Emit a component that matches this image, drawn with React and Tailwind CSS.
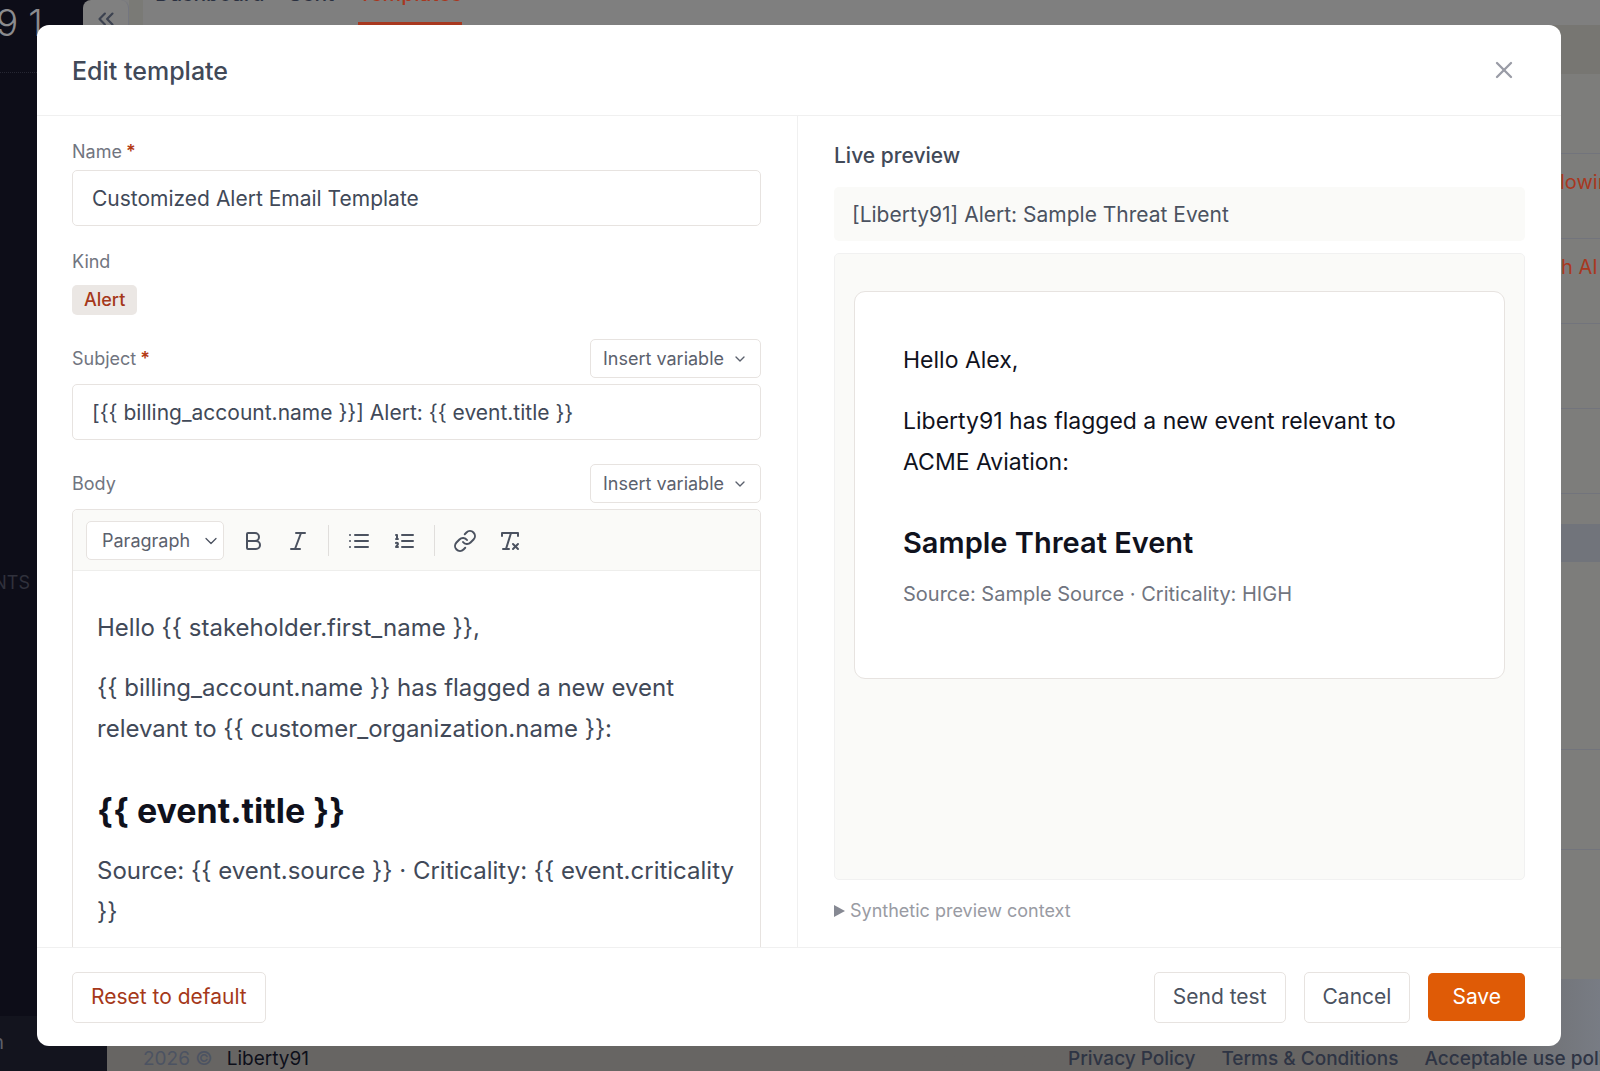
import React from "react";
import { Bold, Italic, Link as LinkIcon, RemoveFormatting, ChevronDown, ChevronsLeft, X } from "lucide-react";

function BulletListIcon() {
  return (
    <svg width="24" height="24" viewBox="0 0 24 24" fill="none" stroke="currentColor" strokeWidth="2" strokeLinecap="round" strokeLinejoin="round" aria-hidden="true">
      <path d="M8 6h13M8 12h13M8 18h13M3 6h.01M3 12h.01M3 18h.01" />
    </svg>
  );
}

function NumberedListIcon() {
  return (
    <svg width="24" height="24" viewBox="0 0 24 24" fill="none" stroke="currentColor" strokeWidth="2" strokeLinecap="round" strokeLinejoin="round" aria-hidden="true">
      <path d="M10 6h11M10 12h11M10 18h11" />
      <path d="M4 6h1v4M4 10h2M6 18H4c0-1 2-2 2-3s-1-1.5-2-1" />
    </svg>
  );
}

function ToolButton({ label, children }) {
  return (
    <button type="button" aria-label={label} className="flex size-9 shrink-0 items-center justify-center rounded text-[#4b5260]">
      {children}
    </button>
  );
}

function Separator() {
  return <span className="mx-[3px] h-[31px] w-px shrink-0 bg-[#e0dedc]" />;
}

function InsertVariable() {
  return (
    <button type="button" className="flex h-[39px] items-center gap-2 rounded-[5px] border border-[#e7e3e0] bg-white px-3 text-lg text-[#5b616d]">
      Insert variable
      <ChevronDown size={16} strokeWidth={2} />
    </button>
  );
}

function Label({ htmlFor, required, children }) {
  return (
    <label htmlFor={htmlFor} className="block text-lg leading-[27px] text-[#71757f]">
      {children}
      {required && <span className="pl-1 font-semibold text-[#b33a14]">*</span>}
    </label>
  );
}

const inputClass =
  "block h-14 w-full rounded-[5px] border border-[#e7e3e0] bg-white px-[19px] text-[21px] text-[#414958] outline-none";
const buttonClass =
  "h-[51px] rounded-[5px] border border-[#e7e3e0] bg-white px-[18px] text-[21px] text-[#4b5260]";

function Background() {
  return (
    <div className="flex h-full" aria-hidden="true">
      <div className="flex w-[107px] shrink-0 flex-col bg-[#0d0d18]">
        <div className="flex h-[73px] gap-2.5 border-b border-dotted border-[#262733] text-[37px] leading-[45px] font-light text-[#8b8b8e]">
          <span className="-ml-[4px]">9</span>
          <span>1</span>
        </div>
        <div className="mt-[496px] flex w-[30px] justify-end text-lg leading-7 text-[#30313c]">NTS</div>
        <div className="mt-auto flex h-[55px] w-full bg-[#13141e]">
          <div className="flex w-1 justify-end pt-3 text-xl text-[#5c5f69]">n</div>
        </div>
      </div>
      <div className="flex min-w-0 flex-1 flex-col bg-[#7d7d7b]">
        <div className="flex h-[25px] shrink-0 bg-[#7f7f7f]">
          <div className="-ml-[24px] flex w-[46px] items-center justify-center rounded-t-lg border-r border-[#74767f] bg-[#808080] pt-3 text-[#3c4250]">
            <ChevronsLeft size={26} strokeWidth={2} />
          </div>
          <div className="w-[14px] bg-[#7a7a76]" />
          <nav className="flex gap-6 pl-3 text-[21px] leading-7 font-medium text-[#2a3040]">
            <span className="-mt-5">Dashboard</span>
            <span className="-mt-5">Sent</span>
            <span className="-mt-5 border-b-[3px] border-[#a8381f] text-[#a8381f]">Templates</span>
          </nav>
        </div>
        <div className="h-[49px] shrink-0 bg-[#777672]" />
        <div className="h-[80px] shrink-0 border-b border-[#72747c]" />
        <div className="flex h-[85px] shrink-0 justify-end border-b border-[#72747c] pt-3.5 text-xl text-[#a8381f]">
          <span className="w-[40px] overflow-hidden whitespace-nowrap">lowin</span>
        </div>
        <div className="flex h-[85px] shrink-0 justify-end border-b border-[#72747c] pt-3.5 text-xl text-[#a8381f]">
          <span className="w-[39px] whitespace-nowrap">h AI</span>
        </div>
        <div className="h-[85px] shrink-0 border-b border-[#72747c]" />
        <div className="h-[85px] shrink-0 border-b border-[#72747c]" />
        <div className="h-[30px] shrink-0" />
        <div className="h-[38px] shrink-0 bg-[#71747b]" />
        <div className="h-[188px] shrink-0 border-b border-[#72747c]" />
        <div className="h-[100px] shrink-0 border-b border-[#72747c]" />
        <div className="flex-1" />
        <footer className="flex h-[92px] shrink-0 items-end justify-between bg-linear-to-r from-[#676563] from-90% to-[#787c84] pl-9 text-[19px] leading-6 font-medium">
          <div className="flex gap-3.5 font-normal">
            <span className="text-[#4c5362]">2026 ©</span>
            <span className="text-[#0d0f1a]">Liberty91</span>
          </div>
          <div className="flex w-[532px] gap-[26px] overflow-hidden whitespace-nowrap text-[#2e3444]">
            <span>Privacy Policy</span>
            <span>Terms &amp; Conditions</span>
            <span>Acceptable use poli</span>
          </div>
        </footer>
      </div>
    </div>
  );
}

export default function App() {
  return (
    <div className="relative h-screen overflow-hidden font-['Inter',sans-serif]">
      <Background />
      <div className="absolute inset-0 flex pt-[25px] pr-[39px] pb-[25px] pl-[37px]">
        <div role="dialog" aria-labelledby="dialog-title" className="flex min-w-0 flex-1 flex-col overflow-hidden rounded-xl bg-white">
          <header className="flex h-[91px] shrink-0 items-center justify-between border-b border-[#f0f0f0] pr-[43px] pl-[35px]">
            <h1 id="dialog-title" className="pt-1 text-[25px] font-medium text-[#414958]">Edit template</h1>
            <button type="button" aria-label="Close" className="text-[#9a9ca6]">
              <X size={28} strokeWidth={2} />
            </button>
          </header>

          <div className="grid min-h-0 flex-1 grid-cols-[761fr_763fr] overflow-hidden">
            <form className="min-w-0 overflow-hidden border-r border-[#f0f0f0] pt-[22px] pr-9 pl-[35px]">
              <Label htmlFor="name" required>Name</Label>
              <input id="name" className={"mt-[5px] " + inputClass} defaultValue="Customized Alert Email Template" />

              <div className="mt-[22px] text-lg leading-[27px] text-[#71757f]">Kind</div>
              <span className="mt-[10px] flex h-[30px] w-fit items-center rounded-[5px] bg-[#ebe7e4] px-3 text-lg font-medium text-[#a5381a]">Alert</span>

              <div className="mt-6 flex items-center justify-between">
                <Label htmlFor="subject" required>Subject</Label>
                <InsertVariable />
              </div>
              <input id="subject" className={"mt-1.5 " + inputClass} defaultValue="[{{ billing_account.name }}] Alert: {{ event.title }}" />

              <div className="mt-6 flex items-center justify-between">
                <span className="text-lg leading-[27px] text-[#71757f]">Body</span>
                <InsertVariable />
              </div>
              <div className="mt-1.5 rounded-t-[5px] border border-[#e7e3e0]">
                <div className="flex items-center gap-[9px] rounded-t-[5px] border-b border-[#eeeeec] bg-[#fafaf8] pt-[11px] pb-[10px] pl-[13px]">
                  <div className="relative mr-0.5">
                    <select aria-label="Text style" className="h-[39px] w-[138px] appearance-none rounded-[5px] border border-[#e7e3e0] bg-white pl-[15px] text-lg text-[#5b616d]">
                      <option>Paragraph</option>
                    </select>
                    <ChevronDown size={20} strokeWidth={1.5} className="pointer-events-none absolute top-2.5 right-[3px] text-[#4b5260]" />
                  </div>
                  <ToolButton label="Bold"><Bold size={24} /></ToolButton>
                  <ToolButton label="Italic"><Italic size={24} /></ToolButton>
                  <Separator />
                  <ToolButton label="Bullet list"><BulletListIcon /></ToolButton>
                  <ToolButton label="Numbered list"><NumberedListIcon /></ToolButton>
                  <Separator />
                  <ToolButton label="Link"><LinkIcon size={24} /></ToolButton>
                  <ToolButton label="Clear formatting"><RemoveFormatting size={24} /></ToolButton>
                </div>
                <div className="px-6 pt-9 pb-10 text-2xl leading-[41px] text-[#414958]">
                  <p>Hello {"{{ stakeholder.first_name }}"},</p>
                  <p className="mt-[19px]">{"{{ billing_account.name }} has flagged a new event relevant to {{ customer_organization.name }}:"}</p>
                  <h2 className="mt-[39px] text-[34px] leading-[45px] font-bold text-[#0f111c]">{"{{ event.title }}"}</h2>
                  <p className="mt-[17px]">{"Source: {{ event.source }} · Criticality: {{ event.criticality }}"}</p>
                </div>
              </div>
            </form>

            <section className="flex min-h-0 min-w-0 flex-col pt-[26px] pr-9 pb-[23px] pl-9">
              <h2 className="text-[21px] leading-7 font-medium text-[#414958]">Live preview</h2>
              <div className="mt-[17px] flex h-[54px] shrink-0 items-center rounded-[5px] bg-[#fafaf8] px-[18px] pt-px text-[21px] text-[#4b5260]">[Liberty91] Alert: Sample Threat Event</div>
              <div className="mt-3 min-h-0 flex-1 rounded-[5px] border border-[#f1f1f1] bg-[#fafaf8] px-[19px] pt-[37px]">
                <article className="rounded-[11px] border border-[#e7e3e0] bg-white px-12 pt-12 pb-[67px] text-[23px] leading-[41px] text-[#10121d]">
                  <p>Hello Alex,</p>
                  <p className="mt-5">Liberty91 has flagged a new event relevant to ACME Aviation:</p>
                  <h3 className="mt-10 text-[29px] leading-10 font-semibold">Sample Threat Event</h3>
                  <p className="mt-3.5 text-xl leading-[34px] text-[#71757f]">Source: Sample Source · Criticality: HIGH</p>
                </article>
              </div>
              <details className="mt-[17px] text-lg leading-[27px] text-[#999ba3]">
                <summary className="flex list-none items-center gap-[5px]">
                  <svg width="11" height="12" viewBox="0 0 11 12" fill="#868993" aria-hidden="true"><path d="M0 0L11 6L0 12Z" /></svg>
                  Synthetic preview context
                </summary>
              </details>
            </section>
          </div>

          <footer className="flex h-[99px] shrink-0 items-center justify-between border-t border-[#f0f0f0] pr-9 pl-[35px]">
            <button type="button" className="h-[51px] rounded-[5px] border border-[#e7e3e0] bg-white px-[18px] text-[21px] text-[#a5381a]">Reset to default</button>
            <div className="flex items-center gap-[18px]">
              <button type="button" className={buttonClass}>Send test</button>
              <button type="button" className={buttonClass}>Cancel</button>
              <button type="button" className="h-12 rounded-[5px] bg-[#df5b06] px-6 text-[21px] text-white">Save</button>
            </div>
          </footer>
        </div>
      </div>
    </div>
  );
}
